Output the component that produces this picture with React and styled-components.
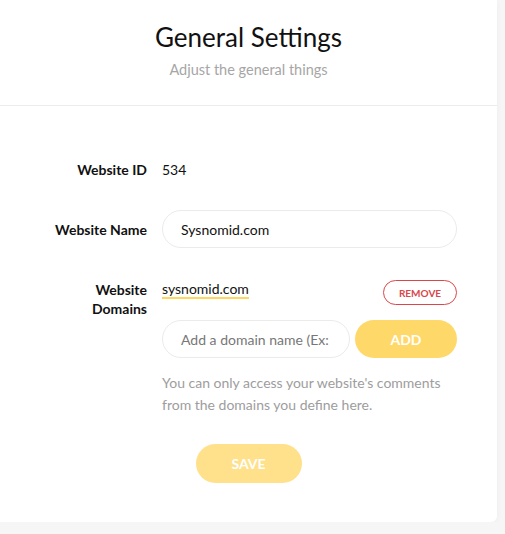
import styled, { createGlobalStyle } from "styled-components";

const GlobalStyle = createGlobalStyle`
  body {
    margin: 0;
    background-color: #f6f6f6;
    font-family: "Lato", "Noto Sans", sans-serif;
    color: #111;
  }
`;

export default function App() {
  return (
    <>
      <GlobalStyle />
      <Card>
        <Header>
          <h1>General Settings</h1>
          <p>Adjust the general things</p>
        </Header>
        <Body>
          <Row>
            <Label>Website ID</Label>
            <Value>534</Value>
          </Row>
          <Row>
            <Label>Website Name</Label>
            <Input defaultValue="Sysnomid.com" />
          </Row>
          <Row $top $space>
            <Label>
              Website
              <br />
              Domains
            </Label>
            <Domains>
              <DomainItem>
                <span>sysnomid.com</span>
                <RemoveButton>REMOVE</RemoveButton>
              </DomainItem>
              <AddRow>
                <Input placeholder="Add a domain name (Ex: example.com)" />
                <Button>ADD</Button>
              </AddRow>
              <Help>
                You can only access your website's comments from the domains
                you define here.
              </Help>
            </Domains>
          </Row>
          <Footer>
            <Button $faded $wide>SAVE</Button>
          </Footer>
        </Body>
      </Card>
    </>
  );
}

const Card = styled.section`
  width: 497px;
  background-color: #fff;
  border-radius: 0 0 6px 0;
  box-shadow: 0 1px 6px rgba(0, 0, 0, 0.04);
`;

const Header = styled.header`
  text-align: center;
  padding: 20px 0 25px;
  border-bottom: 1px solid #ececec;

  > h1 {
    margin: 0;
    font-size: 26px;
    font-weight: 400;
    line-height: 34px;
  }

  > p {
    margin: 6px 0 0;
    font-size: 14.5px;
    line-height: 20px;
    color: #a6a6a6;
  }
`;

const Body = styled.div`
  padding: 45px 0 39px;
`;

const Row = styled.div`
  display: grid;
  grid-template-columns: 147px 295px;
  column-gap: 15px;
  align-items: ${(p) => (p.$top ? "start" : "center")};
  min-height: 37px;
  margin-bottom: 22px;
  margin-top: ${(p) => (p.$space ? "32px" : "0")};
`;

const Label = styled.label`
  text-align: right;
  font-size: 14px;
  font-weight: 700;
  line-height: 19px;
`;

const Value = styled.span`
  font-size: 14px;
`;

const Input = styled.input`
  box-sizing: border-box;
  width: 100%;
  min-width: 0;
  height: 38px;
  padding: 0 18px;
  border: 1px solid #ebebeb;
  border-radius: 19px;
  font-family: inherit;
  font-size: 14px;
  color: #111;
  outline: none;

  &::placeholder {
    color: #777;
  }
`;

const Domains = styled.div`
  display: flex;
  flex-direction: column;
`;

const DomainItem = styled.div`
  display: flex;
  justify-content: space-between;
  align-items: flex-start;
  height: 25px;

  > span {
    font-size: 14px;
    line-height: 17px;
    border-bottom: 2px solid #ffd75e;
  }
`;

const RemoveButton = styled.button`
  height: 25px;
  width: 74px;
  border: 1px solid #d9474a;
  border-radius: 13px;
  background: #fff;
  color: #d9474a;
  font-family: inherit;
  font-size: 10px;
  font-weight: 700;
  padding: 0;
`;

const AddRow = styled.div`
  display: grid;
  grid-template-columns: 188px 102px;
  column-gap: 5px;
  margin-top: 15px;
`;

const Button = styled.button`
  height: ${(p) => (p.$wide ? "39px" : "38px")};
  width: ${(p) => (p.$wide ? "106px" : "auto")};
  border: none;
  border-radius: 20px;
  background-color: ${(p) => (p.$faded ? "#ffe08b" : "#ffd86a")};
  color: #fff;
  font-family: inherit;
  font-size: 14px;
  font-weight: 700;
`;

const Help = styled.p`
  margin: 14px 0 0;
  font-size: 14px;
  line-height: 22px;
  color: #9d9d9d;
`;

const Footer = styled.div`
  display: flex;
  justify-content: center;
  margin-top: 28px;
`;
